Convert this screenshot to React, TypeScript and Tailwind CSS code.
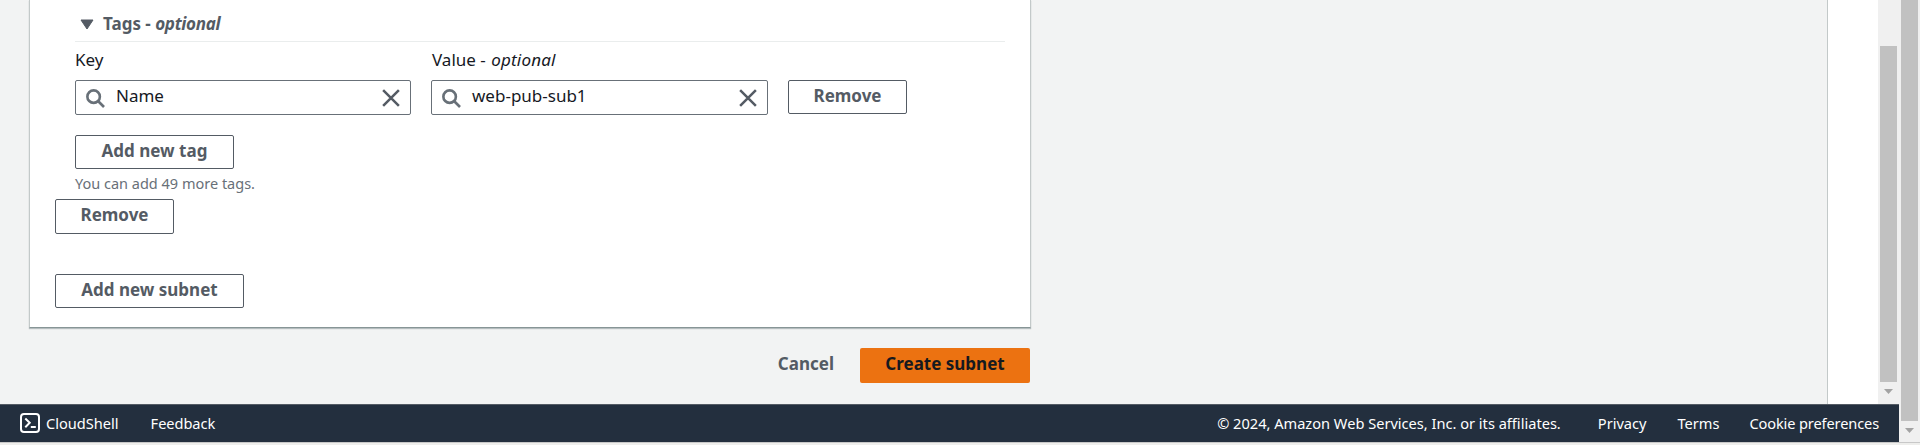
import type { ReactNode } from "react";

function SearchIcon() {
  return (
    <svg viewBox="0 0 16 16" className="h-5 w-5 shrink-0" fill="none" stroke="#687078" strokeWidth="2.1">
      <circle cx="6.9" cy="6.9" r="5" />
      <path d="M10.4 10.4 15.2 15.2" />
    </svg>
  );
}

function ClearIcon() {
  return (
    <svg viewBox="0 0 16 16" className="h-5 w-5 shrink-0" fill="none" stroke="#545b64" strokeWidth="2">
      <path d="M1.7 1.7 14.3 14.3M14.3 1.7 1.7 14.3" />
    </svg>
  );
}

function Field({ value, className }: { value: string; className: string }) {
  return (
    <div className={`flex h-[35px] items-center rounded-[2px] border border-[#687078] bg-white pr-[9px] pl-[9px] ${className}`}>
      <SearchIcon />
      <span className="flex-1 pb-[3px] pl-[11px] text-[17px] leading-6 text-[#16191f]">{value}</span>
      <ClearIcon />
    </div>
  );
}

function Button({ children, className }: { children: ReactNode; className: string }) {
  return (
    <button
      className={`flex items-center justify-center rounded-[2px] border border-[#545b64] bg-white pb-[3px] text-[17px] leading-6 font-bold text-[#545b64] ${className}`}
    >
      {children}
    </button>
  );
}

function DownArrow() {
  return (
    <svg viewBox="0 0 9 5" className="h-[5px] w-[9px]" fill="#a3a3a3">
      <path d="M0 0h9L4.5 5z" />
    </svg>
  );
}

function SubnetCard() {
  return (
    <section className="h-[328px] w-[1002px] border-x border-b border-[#c3c9c9] border-b-[#879596] bg-white pl-[25px] shadow-[0_1px_1px_rgba(0,28,36,0.25)]">
      <div className="ml-5 w-[930px]">
        <h3 className="flex h-[42px] items-center border-b border-[#eaeded] pt-[7px] pl-[5px] text-[17px] leading-6 font-bold text-[#545b64]">
          <svg viewBox="0 0 14 11" className="mr-[9px] h-[11px] w-[14px]" fill="#545b64" stroke="#545b64" strokeLinejoin="round">
            <path d="M1 1h12L7 10z" />
          </svg>
          <span>
            Tags - <i className="tracking-[-0.3px]">optional</i>
          </span>
        </h3>
        <div className="flex pt-[6px] text-[17px] leading-6 text-[#16191f]">
          <span className="w-[357px]">Key</span>
          <span>
            Value - <i className="ml-px tracking-[0.2px]">optional</i>
          </span>
        </div>
        <div className="flex items-start pt-2">
          <Field value="Name" className="w-[336px]" />
          <Field value="web-pub-sub1" className="ml-5 w-[337px]" />
          <Button className="ml-5 h-[34px] w-[119px]">Remove</Button>
        </div>
        <Button className="mt-5 h-[34px] w-[159px]">Add new tag</Button>
        <p className="mt-1 h-[26px] text-[14.5px] leading-5 text-[#687078]">You can add 49 more tags.</p>
      </div>
      <Button className="h-[35px] w-[119px]">Remove</Button>
      <Button className="mt-10 h-[34px] w-[189px]">Add new subnet</Button>
    </section>
  );
}

function Footer() {
  return (
    <footer className="flex h-[38px] items-center border-t border-[#545b64] bg-[#232f3e] pr-5 pb-px pl-5 text-[14.6px] leading-5 text-white">
      <svg viewBox="0 0 20 20" className="mr-[6px] h-5 w-5" fill="none" stroke="white" strokeWidth="2">
        <rect x="1" y="1" width="18" height="18" rx="3" />
        <path d="M5.3 5.5 9.7 9.8 5.3 14.2M10.8 14h5" />
      </svg>
      <span>CloudShell</span>
      <span className="ml-8 flex-1 tracking-[-0.05px]">Feedback</span>
      <span>© 2024, Amazon Web Services, Inc. or its affiliates.</span>
      <span className="ml-[37px]">Privacy</span>
      <span className="ml-[31px]">Terms</span>
      <span className="ml-[30px] tracking-[-0.13px]">Cookie preferences</span>
    </footer>
  );
}

export default function App() {
  return (
    <div className="flex h-[445px] w-[1920px] flex-col overflow-hidden bg-[#f0f0f0] font-['Noto_Sans',sans-serif]">
      <div className="flex h-[442px]">
        <div className="w-[1899px]">
          <div className="flex h-[404px]">
            <main className="w-[1828px] border-r border-[#c3c9c9] bg-[#f2f3f3] pl-[29px]">
              <SubnetCard />
              <div className="flex w-[1001px] items-center justify-end pt-5 text-[17px] leading-6 font-bold">
                <span className="mr-[26px] pb-[3px] text-[#545b64]">Cancel</span>
                <button className="flex h-[35px] w-[170px] items-center justify-center rounded-[2px] bg-[#ec7211] pb-[3px] text-[#16191f]">
                  Create subnet
                </button>
              </div>
            </main>
            <aside className="w-[50px] bg-white" />
            <div className="flex w-[21px] flex-col items-center bg-[#f0f0f0] pt-[46px]">
              <div className="mb-[7px] h-[336px] w-[17px] bg-[#c1c1c1]" />
              <DownArrow />
            </div>
          </div>
          <Footer />
        </div>
        <div className="flex w-[21px] flex-col items-center bg-[#f0f0f0]">
          <div className="mb-[7px] h-[421px] w-[17px] bg-[#c1c1c1]" />
          <DownArrow />
        </div>
      </div>
      <div className="h-[3px] border-t border-[#c8c8c8] bg-[#eeeeec]" />
    </div>
  );
}
